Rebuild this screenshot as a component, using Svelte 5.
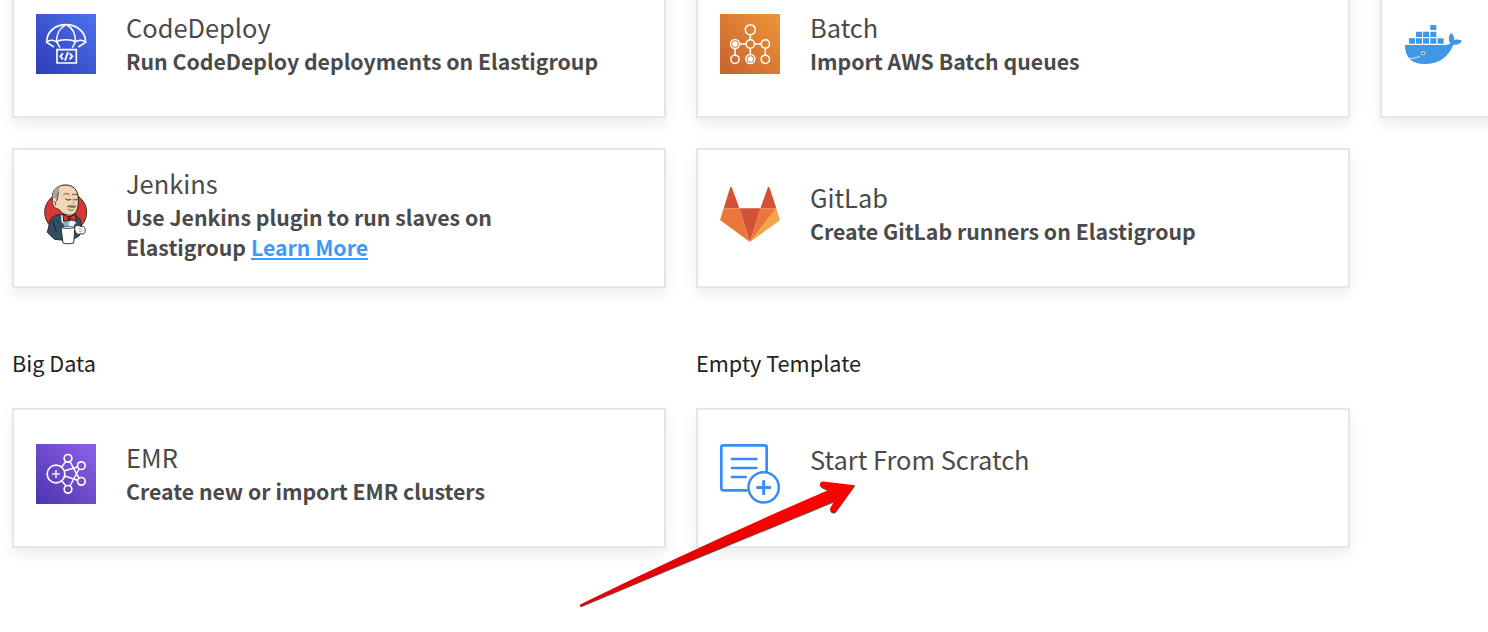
<script>
  const integrations = [
    { icon: 'codedeploy', title: 'CodeDeploy', text: 'Run CodeDeploy deployments on Elastigroup' },
    { icon: 'batch', title: 'Batch', text: 'Import AWS Batch queues' },
    { icon: 'docker', title: '', text: '' },
    { icon: 'jenkins', title: 'Jenkins', text: 'Use Jenkins plugin to run slaves on Elastigroup', link: 'Learn More' },
    { icon: 'gitlab', title: 'GitLab', text: 'Create GitLab runners on Elastigroup' }
  ];
  const groups = [
    { name: 'Big Data', cards: [{ icon: 'emr', title: 'EMR', text: 'Create new or import EMR clusters' }] },
    { name: 'Empty Template', cards: [{ icon: 'scratch', title: 'Start From Scratch', text: '' }] }
  ];
</script>

{#snippet icon(name)}
  {#if name === 'codedeploy'}
    <svg class="icon" viewBox="18 18 180 180">
      <defs><linearGradient id="cd" x1="0" y1="1" x2="1" y2="0"><stop offset="0" stop-color="#2e3bb5" /><stop offset="1" stop-color="#4d72f0" /></linearGradient></defs>
      <path fill="url(#cd)" d="M18 18h180v180H18z" />
      <g fill="none" stroke="#fff" stroke-width="5">
        <path d="M72 117L50 103C50 71 76 50 108 50s59 21 59 53l-22 14" />
        <path d="M50 103c8-8 22-8 30-1 9-9 46-9 56 0 8-7 22-7 31 1" stroke-width="4.5" />
        <path d="M106 51C89 60 79 80 80 102l10 17M111 51c17 9 26 29 25 51l-9 17" stroke-width="4.5" />
        <path d="M81 125h58v40H81z" />
        <path d="M99 136l-8 9 8 9M119 136l8 9-8 9M114 132l-9 26" stroke-width="5.5" />
      </g>
    </svg>
  {:else if name === 'batch'}
    <svg class="icon" viewBox="18 18 180 180">
      <defs><linearGradient id="bt" x1="0" y1="1" x2="1" y2="0"><stop offset="0" stop-color="#c8612f" /><stop offset="1" stop-color="#ec9638" /></linearGradient></defs>
      <path fill="url(#bt)" d="M18 18h180v180H18z" />
      <g fill="none" stroke="#fff" stroke-width="4.5">
        <circle cx="109" cy="65" r="15" /><circle cx="63" cy="108" r="13.5" /><circle cx="109" cy="108" r="12.5" /><circle cx="154" cy="108" r="12.5" />
        <circle cx="63" cy="154" r="12.5" /><circle cx="109" cy="153" r="13.5" /><circle cx="154" cy="154" r="12.5" />
        <path d="M109 80v15M76 108h20M122 108h19M63 121v20M109 121v18M154 121v20" />
      </g>
      <circle cx="63" cy="108" r="8.5" fill="#fff" /><circle cx="109" cy="153" r="8.5" fill="#fff" />
    </svg>
  {:else if name === 'docker'}
    <svg class="icon" viewBox="84 18 180 180">
      <g fill="#3f97e5">
        <path d="M163 51h18v15h-18zM120 71h18v16h-18zM141 71h18v16h-18zM163 71h18v16h-18zM99 91h18v16H99zM120 91h18v16h-18zM141 91h18v16h-18zM163 91h18v16h-18zM185 91h18v16h-18z" />
        <path d="M87 111H207c7 0 13-2 16-5-7-10-5-23 2-31 8 6 11 13 9 21 7-2 16-2 24 2-4 9-13 13-26 12-14 36-43 58-87 58-38 0-59-21-58-57z" />
      </g>
      <path d="M98 151c13 1 25-1 34-7" fill="none" stroke="#fff" stroke-width="2.5" />
      <circle cx="142" cy="136" r="6" fill="#fff" /><circle cx="142" cy="136" r="3.6" fill="#4b5058" />
    </svg>
  {:else if name === 'jenkins'}
    <svg class="icon" viewBox="18 24 180 180">
      <ellipse cx="107" cy="109" rx="63" ry="60" fill="#d33833" stroke="#3a2a2a" stroke-width="3" />
      <path d="M58 145c1-14 8-24 26-29l49 2c14 4 20 12 20 24l4 18-9 19-26 16-48-5-22-21z" fill="#335061" stroke="#202b35" stroke-width="3" />
      <path d="M93 118l42-2 2 28-22 8-20-13z" fill="#fff" />
      <path d="M99 138l16-10 20 1-3 24-28 2z" fill="#81b0c4" />
      <path d="M116 140l11-12 8 4-4 20-14 1z" fill="#eef6fa" />
      <path d="M67 68c-3-24 15-42 41-41 22 0 36 16 37 39 1 23-2 47-19 51-12 3-29-3-35-12l-9-8c-11-2-15-11-12-21z" fill="#f0d6b7" stroke="#251c1a" stroke-width="3" />
      <path d="M68 69c-3-22 9-37 27-41-8 8-9 15-8 22-5 6-4 13-7 22-5-5-8-6-12-3z" fill="#a5a49e" />
      <path d="M69 68c6-3 11 1 12 8l8-4-5 25c-10 0-17-9-15-29z" fill="#f0d6b7" />
      <path d="M71 77c5 0 8 5 5 11M86 50c-5 8 0 15-7 26" fill="none" stroke="#4a3b34" stroke-width="3" />
      <path d="M100 58c6-7 13-6 18-1M126 57c6-4 12-3 17 1" fill="none" stroke="#59473b" stroke-width="3" />
      <path d="M106 68c5 5 11 5 17 2M131 69c4 4 8 3 12 0" fill="none" stroke="#2a2521" stroke-width="3" />
      <path d="M127 69c2 8 7 14 1 17" fill="none" stroke="#9e7b61" stroke-width="2" />
      <path d="M112 91c11-5 18 2 26-1-3 4-7 5-11 4-6 0-10-2-15-3z" fill="#bd9d82" stroke="#40332b" stroke-width="2" />
      <path d="M113 99c5 5 13 5 18 2" fill="none" stroke="#60483b" stroke-width="2.5" />
      <path d="M99 115l18 8 20-9 2 21-18-4-20 5z" fill="#d33833" stroke="#30191c" stroke-width="3" />
      <path d="M114 121l8 1 1 11-8 1z" fill="#9f1b21" stroke="#30191c" stroke-width="2" />
      <path d="M87 140l-8-9M68 134l11 34" fill="none" stroke="#1b2937" stroke-width="3" />
      <path d="M93 154c10 4 26 3 42-1l-4 48c-9 3-23 3-32 0z" fill="#fff" stroke="#333" stroke-width="3" />
      <path d="M94 155c10-5 29-5 40 0-10 3-29 4-40 0z" fill="#eef0f0" stroke="#333" stroke-width="2" />
      <path d="M134 154c4-7 13-7 18-2 10-4 15 4 13 11 3 7-4 13-13 10-11 5-18-2-18-19z" fill="#fff" stroke="#333" stroke-width="3" />
      <path d="M145 158c6-2 10 1 12 5M147 166c5-1 8 0 10 3" fill="none" stroke="#777" stroke-width="2" />
    </svg>
  {:else if name === 'gitlab'}
    <svg class="icon" viewBox="18 18 180 180">
      <path d="M29 91L49 27h4l23 64zM139 91l23-64h4l21 64z" fill="#d35235" />
      <path d="M29 91h47l32 101-90-66z" fill="#ec753b" />
      <path d="M76 91h64l-32 101z" fill="#d35235" />
      <path d="M140 91h47l-79 101z" fill="#ec753b" />
      <path d="M187 91l11 36-90 65z" fill="#f0a748" />
    </svg>
  {:else if name === 'emr'}
    <svg class="icon" viewBox="18 18 180 180">
      <defs><linearGradient id="em" x1="0" y1="1" x2="1" y2="0"><stop offset="0" stop-color="#4c35ad" /><stop offset="1" stop-color="#8d62e8" /></linearGradient></defs>
      <path fill="url(#em)" d="M18 18h180v180H18z" />
      <g fill="none" stroke="#fff" stroke-width="5">
        <circle cx="78" cy="108" r="26.5" />
        <path d="M78 96v24M66 108h24" stroke-opacity=".85" />
        <circle cx="114" cy="61" r="11.5" /><circle cx="154" cy="83" r="11.5" /><circle cx="154" cy="130" r="11.5" /><circle cx="114" cy="154" r="11.5" />
        <path d="M107 71L95 87M120 71l27 50M104 98l39-11M104 114l39 13M95 128l13 16M147 93l-27 51" stroke-width="4.5" />
      </g>
    </svg>
  {:else}
    <svg class="icon" viewBox="18 18 180 180">
      <g fill="none" stroke="#398bf7" stroke-width="8">
        <path d="M101 157H28q-6 0-6-6V28q0-6 6-6h124q6 0 6 6v75" />
        <path d="M54 63h73M54 90h73M54 117h41" stroke-linecap="round" />
        <circle cx="149" cy="148" r="45.5" fill="#fff" stroke-width="7.5" />
        <path d="M149 130v37M130.500 148.500h37" stroke-width="9" stroke-linecap="round" />
      </g>
    </svg>
  {/if}
{/snippet}

{#snippet card(item)}
  <article class="card" class:two-line={item.link} class:title-only={!item.text}>
    {@render icon(item.icon)}
    <div class="copy">
      <h2>{item.title}</h2>
      {#if item.text}
        <p>{item.text}{#if item.link}{' '}<a href="#learn">{item.link}</a>{/if}</p>
      {/if}
    </div>
  </article>
{/snippet}

<main>
  <section class="grid">
    {#each integrations as item}{@render card(item)}{/each}
  </section>
  <div class="grid groups">
    {#each groups as group}
      <section>
        <h3>{group.name}</h3>
        {#each group.cards as item}{@render card(item)}{/each}
      </section>
    {/each}
  </div>
  <svg class="arrow" viewBox="0 0 300 150">
    <defs>
      <linearGradient id="red" x1="0.45" y1="0.35" x2="0.52" y2="0.55"><stop offset="0" stop-color="#f00" /><stop offset="1" stop-color="#e60000" /></linearGradient>
    </defs>
    <path fill="url(#red)" d="M10.200 134.400Q133 74 258 20.200L252.500 17.600C248.500 15.500 249.800 11.300 253.300 11.500L285 15.200 266.500 41C263.500 44.500 259 41.500 260.500 37.800L264 31.600Q136 84 11.200 136.200Q9.600 136 10.200 134.400Z" />
  </svg>
</main>

<style>
  :global(body) { margin: 0; background: #fff; }
  main {
    position: relative;
    box-sizing: border-box;
    height: 632px;
    overflow: hidden;
    padding-left: 12px;
    font-family: "Noto Sans CJK SC", "Noto Sans", sans-serif;
    color: #4a4a4a;
  }
  .grid {
    display: grid;
    grid-template-columns: repeat(3, 654px);
    gap: 30px;
  }
  section.grid { margin-top: -22px; }
  .groups { margin-top: 59px; }
  .card {
    box-sizing: border-box;
    display: flex;
    align-items: flex-start;
    height: 140px;
    padding: 34px 22px 0;
    border: 2px solid #e6e6e6;
    background: #fff;
    box-shadow: 0 4px 20px rgba(0, 0, 0, 0.04), 0 8px 10px rgba(0, 0, 0, 0.04);
  }
  .icon { flex: none; width: 60px; height: 60px; overflow: visible; }
  .copy { width: 480px; margin: -5px 0 0 30px; }
  .two-line .copy { width: 400px; margin-top: -19px; }
  .title-only .copy { margin-top: -3px; }
  h2, h3, p { margin: 0; }
  h2 { font-size: 25.45px; line-height: 36px; font-weight: 400; }
  p { padding-top: 1px; font-size: 21.28px; line-height: 30px; font-weight: 700; }
  a { color: #3f99f7; text-decoration: underline; text-decoration-thickness: 2px; text-underline-offset: 2px; }
  h3 { height: 61px; font-size: 21.7px; line-height: 32px; font-weight: 400; color: #222; }
  .arrow { position: absolute; left: 570px; top: 470px; width: 300px; height: 150px; filter: drop-shadow(0 1px 0.6px rgba(0, 0, 0, 0.65)); }
</style>
